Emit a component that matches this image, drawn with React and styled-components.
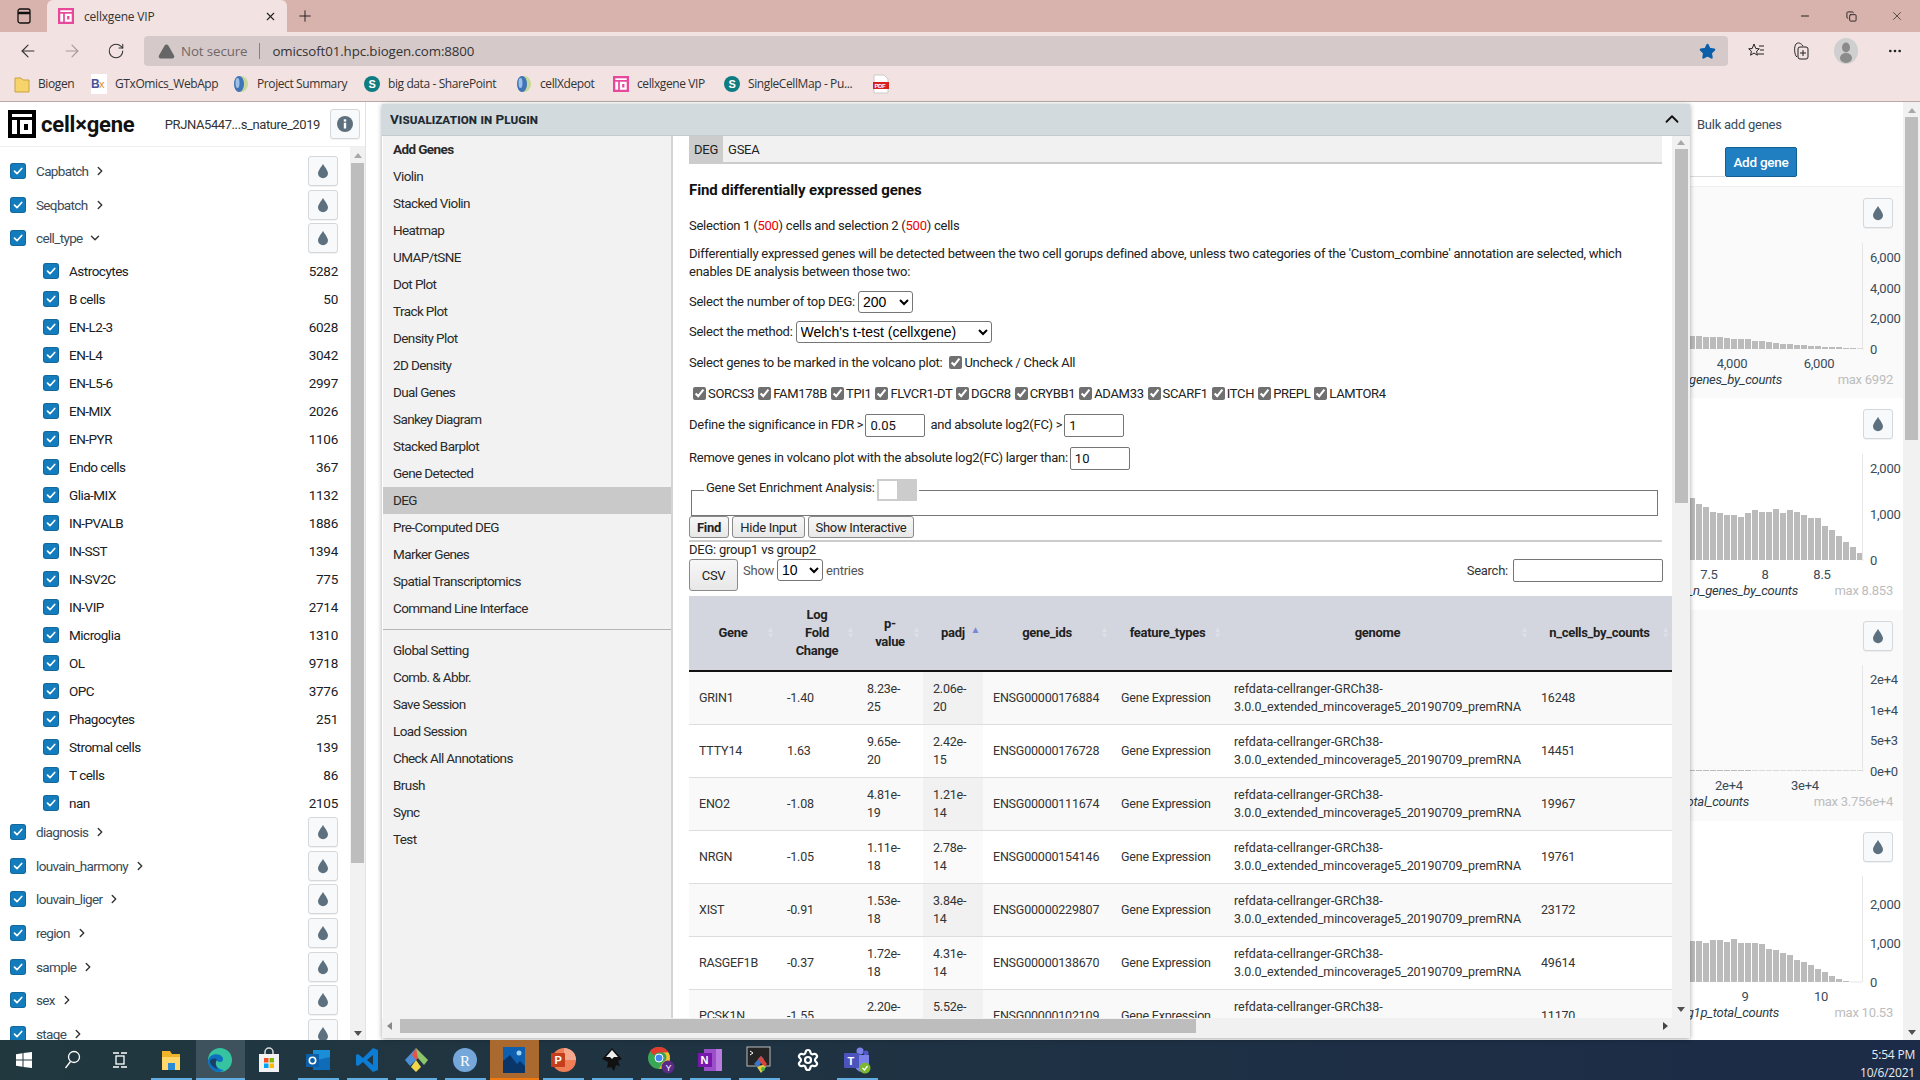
import React from "react";
import styled, { createGlobalStyle } from "styled-components";
import { ArrowLeft, ArrowRight, RotateCw, Plus, X, Minus, Copy, Star, ChevronRight, ChevronDown, ChevronUp, Settings, MoreHorizontal, AlertTriangle } from "lucide-react";

const Global = createGlobalStyle`
  html, body { margin: 0; padding: 0; background: #fff; }
  * { box-sizing: border-box; }
  body { font-family: Roboto, "Liberation Sans", sans-serif; font-size: 13px; letter-spacing: -0.25px; color: #222; }
`;

const Root = styled.div`width:1920px;height:1080px;display:flex;flex-direction:column;overflow:hidden;`;
const TabBar = styled.div`height:32px;background:#d8b3ad;display:flex;align-items:stretch;flex:none;font-family:"Open Sans",sans-serif;letter-spacing:-.2px;`;
const TabToggle = styled.div`width:47px;display:flex;align-items:center;justify-content:center;`;
const Tab = styled.div`width:240px;background:#f2e2e1;border-radius:6px 6px 0 0;display:flex;align-items:center;padding:0 10px 0 11px;gap:10px;font-size:12px;color:#333;`;
const TabTitle = styled.span`flex:1;`;
const NewTab = styled.div`width:36px;display:flex;align-items:center;justify-content:center;`;
const WindowControls = styled.div`margin-left:auto;display:flex;align-items:center;padding-right:0;`;
const WindowButton = styled.div`width:46px;height:28px;display:flex;align-items:center;justify-content:center;color:#222;`;
const NavBar = styled.div`height:34px;background:#f2e2e1;padding-top:4px;display:flex;flex:none;padding-left:6px;`;
const NavButton = styled.div`width:44px;height:30px;display:flex;align-items:center;justify-content:center;color:${p => p.$dim ? "#a59a9a" : "#333"};`;
const Address = styled.div`flex:1;margin-left:6px;height:30px;background:#d5c9c9;border-radius:4px;display:flex;align-items:center;padding:0 12px 0 14px;font-family:"Open Sans",sans-serif;font-size:13.3px;letter-spacing:-.1px;color:#333;`;
const NotSecure = styled.span`color:#6f6767;margin-left:6px;`;
const Sep = styled.span`width:1px;height:16px;background:#8a8080;margin:0 12px 0 12px;`;
const Url = styled.span`flex:1;`;
const NavSlot = styled.div`width:${p => p.$w}px;height:30px;display:flex;align-items:center;justify-content:center;color:#222;margin-left:${p => p.$ml || 0}px;`;
const Bookmarks = styled.div`height:36px;background:#f2e2e1;border-bottom:1px solid #b9aaa8;display:flex;align-items:center;padding-left:14px;flex:none;font-family:"Open Sans",sans-serif;font-size:12px;letter-spacing:-.4px;color:#333;`;
const BookItem = styled.div`width:${p => p.$w}px;display:flex;align-items:center;gap:8px;white-space:nowrap;`;

const Page = styled.div`flex:1;min-height:0;position:relative;display:flex;background:#fff;`;
const Left = styled.aside`width:366px;border-right:1px solid #e3e3e3;display:flex;flex-direction:column;flex:none;`;
const LeftHead = styled.div`height:45px;display:flex;align-items:center;padding:0 5px 0 8px;border-bottom:1px solid #eee;flex:none;`;
const LogoText = styled.span`font-weight:700;font-size:22px;letter-spacing:-.2px;color:#111;margin-left:5px;`;
const Dataset = styled.span`margin-left:auto;font-size:13px;color:#333;letter-spacing:-.4px;margin-right:10px;`;
const IconBtn = styled.div`width:30px;height:30px;border:1px solid #d4d8da;border-radius:3px;background:#f8f9fa;display:flex;align-items:center;justify-content:center;flex:none;box-shadow:0 1px 0 rgba(0,0,0,.05);`;
const LeftBody = styled.div`flex:1;min-height:0;display:flex;overflow:hidden;`;
const LeftList = styled.div`flex:1;padding:7px 12px 0 10px;overflow:hidden;`;
const TopRow = styled.div`height:33.7px;display:flex;align-items:center;color:#394b59;font-size:13.5px;letter-spacing:-.65px;`;
const TopLabel = styled.span`margin-left:10px;margin-right:5px;`;
const Box = styled.span`width:16px;height:16px;background:#137cbd;border-radius:3px;display:flex;align-items:center;justify-content:center;flex:none;box-shadow:inset 0 0 0 1px rgba(16,22,26,.2);`;
const Push = styled.div`margin-left:auto;`;
const SubList = styled.div`padding:2px 0 0 33px;margin-bottom:-2px;`;
const SubRow = styled.div`height:28px;display:flex;align-items:center;color:#182026;font-size:13.5px;letter-spacing:-.5px;`;
const SubLabel = styled.span`margin-left:10px;`;
const Count = styled.span`margin-left:auto;letter-spacing:-.25px;`;

const Scroll = styled.div`width:${p => p.$w}px;background:${p => p.$bg || "#f1f1f1"};display:flex;flex-direction:column;align-items:center;flex:none;padding-top:${p => p.$pt || 0}px;`;
const Thumb = styled.div`width:13px;height:${p => p.$h}px;background:#bdbdbd;margin-top:${p => p.$mt || 0}px;flex:none;`;
const ArrowUp = styled.div`width:0;height:0;border:4px solid transparent;border-top:0;border-bottom:5px solid #a8a8a8;margin-top:${p => p.$mt || 0}px;flex:none;`;
const ArrowDown = styled.div`width:0;height:0;border:4px solid transparent;border-bottom:0;border-top:5px solid #505050;margin-top:auto;margin-bottom:${p => p.$mb}px;flex:none;`;

const Center = styled.div`flex:1;`;
const Right = styled.aside`width:420px;flex:none;display:flex;`;
const RightMain = styled.div`width:403px;flex:none;`;
const RightTop = styled.div`height:84.5px;border-bottom:1px solid #f0f0f0;padding-top:15px;`;
const Bulk = styled.div`padding-left:197px;height:16px;line-height:16px;color:#394b59;`;
const AddRow = styled.div`display:flex;justify-content:flex-end;padding-right:106px;margin-top:14px;`;
const AddInput = styled.div`width:200px;height:30px;border-bottom:1px solid #ddd;`;
const AddBtn = styled.div`width:72px;height:30px;background:#1f7fc1;border:1px solid #10618f;border-radius:2px;color:#fff;display:flex;align-items:center;justify-content:center;font-weight:500;font-size:13.5px;`;
const Card = styled.div`height:211.5px;position:relative;background:${p => p.$alt ? "#fafafa" : "#fff"};`;
const CardBtn = styled(IconBtn)`position:absolute;right:10px;top:11px;`;
const Chart = styled.svg`display:block;`;

const Modal = styled.section`position:absolute;left:382px;top:2px;width:1308px;height:934px;background:#fff;box-shadow:0 1px 5px rgba(0,0,0,.35);display:flex;flex-direction:column;overflow:hidden;`;
const ModalHead = styled.header`height:32px;background:#d3dadd;border-bottom:1px solid #c4cbce;display:flex;align-items:center;justify-content:space-between;padding:0 7px 2px 8px;flex:none;`;
const ModalTitle = styled.h2`margin:0;font-size:13.5px;font-weight:700;font-variant:small-caps;letter-spacing:.05px;color:#1e2a33;`;
const ModalBody = styled.div`flex:1;min-height:0;display:flex;`;
const Menu = styled.nav`width:290px;margin-left:1px;background:#f2f2f2;border-right:2px solid #d4d4d4;flex:none;`;
const MenuItem = styled.div`height:27px;display:flex;align-items:center;padding:0 0 2px 10px;color:#2a2a2a;font-size:13.5px;letter-spacing:-.6px;font-weight:${p => p.$bold ? 700 : 400};background:${p => p.$active ? "#c9c9c9" : "transparent"};`;
const MenuDivider = styled.div`border-top:1px solid #b5b5b5;margin:7px 0 0;padding-top:7px;`;
const MainPane = styled.div`width:999px;padding-left:16px;overflow:hidden;flex:none;`;
const Tabs = styled.div`height:28px;width:973px;background:#f1f1f1;border-bottom:2px solid #ccc;display:flex;`;
const TabPill = styled.div`height:26px;padding:0 5px;display:flex;align-items:center;background:${p => p.$on ? "#ccc" : "transparent"};color:#222;`;
const Heading = styled.h3`margin:16px 0 0;height:20px;line-height:20px;font-size:15px;font-weight:700;letter-spacing:-.1px;color:#111;`;
const Line = styled.div`margin-top:${p => p.$mt}px;min-height:${p => p.$h}px;line-height:18px;display:flex;align-items:center;gap:${p => p.$gap ?? 3}px;white-space:pre;color:#222;padding-left:${p => p.$pl || 0}px;letter-spacing:${p => p.$ls || "inherit"};`;
const Para = styled.div`margin-top:10px;line-height:18px;width:973px;color:#222;`;
const Red = styled.span`color:#e00;`;
const Select = styled.select`height:${p => p.$h || 22}px;width:${p => p.$w}px;font:14px Arial,"Liberation Sans",sans-serif;letter-spacing:0;background:#fff;border:1px solid #767676;border-radius:3px;color:#000;`;
const Check = styled.input.attrs({ type: "checkbox", defaultChecked: true })`width:13px;height:13px;margin:0 2px 2px 1px;accent-color:#707070;flex:none;`;
const Num = styled.input.attrs({ type: "text" })`width:60px;height:23px;border:1px solid #767676;border-radius:2px;padding:0 4px;font:13px Roboto,sans-serif;color:#111;margin:0 2px;`;
const Field = styled.fieldset`margin:9px 4px 0 2px;width:967px;height:37px;padding:0;border:1px solid #767676;border-width:1.5px;`;
const Legend = styled.legend`margin-left:12px;padding:0 2px;display:flex;align-items:center;height:22px;gap:2px;color:#222;`;
const LegendText = styled.span`margin-bottom:5px;`;
const Toggle = styled.span`width:40px;height:22px;background:#ccc;padding:2px;display:block;`;
const Knob = styled.span`width:18px;height:18px;background:#fff;display:block;`;
const Buttons = styled.div`display:flex;gap:3px;height:22px;`;
const Btn = styled.button`height:${p => p.$h || 22}px;width:${p => p.$w}px;border:1px solid #8a8a8a;border-radius:3px;background:linear-gradient(#f7f7f7,#e8e8e8);font:${p => p.$bold ? 700 : 400} 13px Roboto,sans-serif;letter-spacing:-.3px;color:#222;padding:0;`;
const Rule = styled.div`height:2px;width:973px;background:#ccc;margin-top:2px;`;
const Caption = styled.div`height:15px;line-height:15px;`;
const Controls = styled.div`margin-top:1px;margin-bottom:4px;height:34px;width:974px;display:flex;align-items:flex-start;`;
const CsvBtn = styled(Btn)`margin:1px 5px 0 0;`;
const Show = styled.div`display:flex;align-items:center;gap:3px;color:#555;margin-top:1px;`;
const SearchBox = styled.label`margin:1px 0 0 auto;display:flex;align-items:center;gap:5px;color:#333;`;
const SearchInput = styled.input`width:150px;height:23px;border:1px solid #767676;border-radius:2px;`;
const Table = styled.table`table-layout:fixed;width:983px;border-collapse:collapse;`;
const Th = styled.th`height:75px;background:#d3d6df;border-bottom:2px solid #111;padding:0 ${p => p.$pr || 8}px 0 8px;font-size:13px;letter-spacing:-.3px;font-weight:700;line-height:18px;text-align:center;position:relative;color:#222;`;
const Sort = styled.span`position:absolute;right:3px;top:50%;margin-top:-6px;font-size:${p => p.$on ? 10 : 8}px;line-height:6px;color:${p => p.$on ? "#7c86d8" : "#dfe0e4"};display:block;`;
const Td = styled.td`height:53px;padding:0 10px;border-bottom:1px solid #ddd;line-height:18px;font-size:12.5px;color:#333;letter-spacing:${p => p.$wide ? "-.06px" : "-.2px"};background:${p => p.$sorted ? (p.$odd ? "#f1f1f1" : "#fafafa") : (p.$odd ? "#f9f9f9" : "#fff")};white-space:nowrap;`;
const HScroll = styled.div`height:20px;background:#f1f1f1;display:flex;align-items:center;flex:none;padding-bottom:4px;`;
const ArrowL = styled.div`width:0;height:0;border:4px solid transparent;border-left:0;border-right:5px solid #888;margin:0 5px;flex:none;`;
const ArrowR = styled.div`width:0;height:0;border:4px solid transparent;border-right:0;border-left:5px solid #444;margin-left:auto;margin-right:22px;flex:none;`;
const HThumb = styled.div`width:796px;height:14px;background:#bdbdbd;margin-left:3px;`;

const Taskbar = styled.footer`height:40px;flex:none;background:linear-gradient(90deg,#21383f,#1c2b47);display:flex;color:#fff;padding-left:0;`;
const TaskSlot = styled.div`width:${p => p.$w || 49}px;height:40px;position:relative;display:flex;align-items:center;justify-content:center;flex:none;background:${p => p.$bg || "transparent"};
  &::after{content:"";display:${p => p.$bar ? "block" : "none"};position:absolute;bottom:0;height:2px;left:${p => p.$full ? 0 : 4}px;right:${p => p.$full ? 0 : 4}px;background:${p => p.$barColor || "#62aee2"};}`;
const Spacer = styled.div`width:2.5px;flex:none;`;
const Clock = styled.div`margin-left:auto;padding:6px 5px 0 0;text-align:right;font-size:12px;line-height:18px;font-family:"Open Sans",sans-serif;letter-spacing:-.2px;color:#e8ecf0;`;

const Drop = () => <svg width="14" height="16" viewBox="0 0 14 16"><path fill="#5c7080" d="M7 1C6 3 2 7.500 2 10.300A5 5 0 0 0 12 10.300C12 7.500 8 3 7 1Z" /></svg>;
const Tick = () => <svg width="12" height="12" viewBox="0 0 12 12"><path d="M2.500 6.200 5 8.700 9.700 3.500" fill="none" stroke="#fff" strokeWidth="1.700" strokeLinecap="round" strokeLinejoin="round" /></svg>;
const Cb = () => <Box><Tick /></Box>;
const Logo = ({ s = 28, bg = "#000" }) => (
  <svg width={s} height={s} viewBox="0 0 28 28"><rect width="28" height="28" fill={bg} /><rect x="4" y="4" width="20" height="3" fill="#fff" /><rect x="4" y="10" width="5" height="14" fill="#fff" /><path fillRule="evenodd" fill="#fff" d="M12 10h12v14H12zM16 14v6h4v-6z" /></svg>
);
const SpIcon = () => <svg width="16" height="18" viewBox="0 0 16 18"><circle cx="8" cy="9" r="8" fill="#0f7c82" /><text x="4.500" y="13" fontSize="11" fontWeight="700" fill="#fff" fontFamily="Liberation Sans">S</text></svg>;
const Ball = () => <svg width="16" height="18" viewBox="0 0 16 18"><ellipse cx="8" cy="9" rx="7" ry="8" fill="#c7d89a" /><ellipse cx="6" cy="9" rx="5" ry="8" fill="#3f74b8" /><ellipse cx="4.500" cy="8" rx="2" ry="5" fill="#9cc0e8" /></svg>;

const groups1 = [["Capbatch", "r"], ["Seqbatch", "r"], ["cell_type", "d"]];
const groups2 = ["diagnosis", "louvain_harmony", "louvain_liger", "region", "sample", "sex", "stage"];
const cats = [["Astrocytes", 5282], ["B cells", 50], ["EN-L2-3", 6028], ["EN-L4", 3042], ["EN-L5-6", 2997], ["EN-MIX", 2026], ["EN-PYR", 1106], ["Endo cells", 367], ["Glia-MIX", 1132], ["IN-PVALB", 1886], ["IN-SST", 1394], ["IN-SV2C", 775], ["IN-VIP", 2714], ["Microglia", 1310], ["OL", 9718], ["OPC", 3776], ["Phagocytes", 251], ["Stromal cells", 139], ["T cells", 86], ["nan", 2105]];
const menu1 = ["Add Genes", "Violin", "Stacked Violin", "Heatmap", "UMAP/tSNE", "Dot Plot", "Track Plot", "Density Plot", "2D Density", "Dual Genes", "Sankey Diagram", "Stacked Barplot", "Gene Detected", "DEG", "Pre-Computed DEG", "Marker Genes", "Spatial Transcriptomics", "Command Line Interface"];
const menu2 = ["Global Setting", "Comb. & Abbr.", "Save Session", "Load Session", "Check All Annotations", "Brush", "Sync", "Test"];
const genesList = ["SORCS3", "FAM178B", "TPI1", "FLVCR1-DT", "DGCR8", "CRYBB1", "ADAM33", "SCARF1", "ITCH", "PREPL", "LAMTOR4"];
const rows = [
  ["GRIN1", "-1.40", "8.23e-", "25", "2.06e-", "20", "ENSG00000176884", "16248"],
  ["TTTY14", "1.63", "9.65e-", "20", "2.42e-", "15", "ENSG00000176728", "14451"],
  ["ENO2", "-1.08", "4.81e-", "19", "1.21e-", "14", "ENSG00000111674", "19967"],
  ["NRGN", "-1.05", "1.11e-", "18", "2.78e-", "14", "ENSG00000154146", "19761"],
  ["XIST", "-0.91", "1.53e-", "18", "3.84e-", "14", "ENSG00000229807", "23172"],
  ["RASGEF1B", "-0.37", "1.72e-", "18", "4.31e-", "14", "ENSG00000138670", "49614"],
  ["PCSK1N", "-1.55", "2.20e-", "18", "5.52e-", "14", "ENSG00000102109", "11170"],
];
const widths = [88, 80, 66, 60, 128, 113, 307, 141];

const cards = [
  { alt: true, base: 162, bars: [13, 13, 12, 12, 12, 11, 10, 10, 10, 8, 8, 7, 6, 5, 5, 4, 4, 3, 3, 2, 2, 2, 1, 1, 0.5], y: [["6,000", 70], ["4,000", 101], ["2,000", 131], ["0", 162]], x: [["4,000", 1732], ["6,000", 1819]], label: "n_genes_by_counts", end: 1782, max: "max 6992" },
  { base: 162, bars: [62, 56, 53, 48, 47, 45, 45, 43, 47, 50, 48, 48, 51, 47, 50, 48, 45, 42, 42, 34, 30, 24, 18, 13, 7], y: [["2,000", 70], ["1,000", 116], ["0", 162]], x: [["7.5", 1709], ["8", 1765], ["8.5", 1822]], label: "log1p_n_genes_by_counts", end: 1798, max: "max 8.853" },
  { alt: true, base: 161, bars: [1, 1, 1, 1, 1, 1, 1, 1, 1, 0.5, 0.5, 0.5, 0.5, 0.5, 0.5, 0.5, 0.5, 0.5, 0.5, 0.5, 0.5, 0.5, 0.5, 0.5, 0.5], y: [["2e+4", 69], ["1e+4", 100], ["5e+3", 130], ["0e+0", 161]], x: [["2e+4", 1729], ["3e+4", 1805]], label: "total_counts", end: 1749, max: "max 3.756e+4" },
  { base: 161, bars: [41, 41, 39, 42, 42, 40, 43, 39, 39, 39, 38, 33, 32, 29, 27, 22, 20, 17, 13, 10, 6, 3, 1], y: [["2,000", 83], ["1,000", 122], ["0", 161]], x: [["9", 1745], ["10", 1821]], label: "log1p_total_counts", end: 1779, max: "max 10.53" },
];

function Histogram({ c }) {
  const o = 1500;
  return (
    <Card $alt={c.alt}>
      <CardBtn><Drop /></CardBtn>
      <Chart width="403" height="211" viewBox="0 0 403 211" fontFamily="Roboto, sans-serif" fontSize="13" fill="#394b59">
        {c.bars.map((h, i) => <rect key={i} x={189 + i * 7} y={c.base - h} width="6" height={h} fill="#bbb" />)}
        <path d={`M362.500 ${c.base - 106}V${c.base}M${189 + c.bars.length * 7} ${c.base}H362`} stroke="#e6e6e6" fill="none" />
        {c.y.map(([t, y]) => <text key={t} x="370" y={y + 5}>{t}</text>)}
        {c.x.map(([t, x]) => <text key={t} x={x - o} y={c.base + 19} textAnchor="middle">{t}</text>)}
        <text x={c.end - o} y={c.base + 35} textAnchor="end" fontStyle="italic" fill="#2b3a45">{c.label}</text>
        <text x="393" y={c.base + 35} textAnchor="end" fill="#bdbdbd">{c.max}</text>
      </Chart>
    </Card>
  );
}

const Win = () => <svg width="18" height="18" viewBox="0 0 18 18" fill="#fff"><path d="M1 3.200 7.500 2.300V8.500H1zM8.500 2.100 17 1V8.500H8.500zM1 9.500H7.500V15.700L1 14.800zM8.500 9.500H17V17L8.500 15.900z" /></svg>;
const SearchGlyph = () => <svg width="18" height="20" viewBox="0 0 18 20" fill="none" stroke="#fff" strokeWidth="1.300"><circle cx="11" cy="7" r="5.500" /><path d="M7.500 11.500 2.500 18" /></svg>;
const TaskView = () => <svg width="18" height="18" viewBox="0 0 18 18" fill="none" stroke="#fff" strokeWidth="1.300"><rect x="5" y="5" width="8" height="8" /><path d="M2 2h6M10 2h6M2 16h6M10 16h6" /></svg>;
const Explorer = () => <svg width="24" height="24" viewBox="0 0 24 24"><path fill="#f0b429" d="M3 3h8l2 3h8v16H3z" /><rect x="3" y="9" width="18" height="13" fill="#ffd76a" /><rect x="9" y="15" width="7" height="7" fill="#2a8ad4" /></svg>;
const Edge = () => <svg width="26" height="26" viewBox="0 0 26 26"><circle cx="13" cy="13" r="12" fill="#36c4a0" /><path fill="#0c6fbf" d="M1 14C2 8 8 6 13 8c4 2 4 7 0 7-2 0-3-1-3-2-3 3 0 10 7 10-2 1-3 2-5 2C6 25 1 20 1 14Z" /><path fill="#1b3d68" d="M10 13c-2 2-2 6 1 9-5-1-8-5-8-8 2-3 5-3 7-1Z" /></svg>;
const Store = () => <svg width="24" height="26" viewBox="0 0 24 26"><path d="M8 8V5a4 4 0 0 1 8 0v3" fill="none" stroke="#ddd" strokeWidth="1.500" /><rect x="2" y="7" width="20" height="18" fill="#f2f2f2" /><rect x="7" y="11" width="4.500" height="4.500" fill="#f25022" /><rect x="12.500" y="11" width="4.500" height="4.500" fill="#7fba00" /><rect x="7" y="16.500" width="4.500" height="4.500" fill="#00a4ef" /><rect x="12.500" y="16.500" width="4.500" height="4.500" fill="#ffb900" /></svg>;
const Outlook = () => <svg width="26" height="26" viewBox="0 0 26 26"><rect x="8" y="3" width="17" height="20" fill="#1a8ed6" /><path d="M8 14 25 10v13H8z" fill="#0f6cb8" /><rect x="1" y="7" width="13" height="13" fill="#0b5ea8" /><circle cx="7.500" cy="13.500" r="3.200" fill="none" stroke="#fff" strokeWidth="1.600" /></svg>;
const VSCode = () => <svg width="24" height="26" viewBox="0 0 24 26"><path fill="#0c7cd5" d="M18 1 8 11 3 7 1 8v10l2 1 5-4 10 10 5-2V3zM18 8v10l-6-5z" /></svg>;
const Git = () => <svg width="26" height="26" viewBox="0 0 26 26"><path fill="#4d8fd6" d="M13 1 2 13l5 6 6-6z" /><path fill="#e5534b" d="M13 1 9 8l4 5 5-4z" /><path fill="#8dc56c" d="M13 1l12 12-4 5-6-7z" /><path fill="#f2d649" d="M8 20l5-7 5 7-5 5z" /></svg>;
const RIcon = () => <svg width="24" height="24" viewBox="0 0 24 24"><circle cx="12" cy="12" r="12" fill="#75a7da" /><text x="7" y="17.500" fontSize="15" fill="#fff" fontFamily="Liberation Serif">R</text></svg>;
const Photos = () => <svg width="24" height="28" viewBox="0 0 24 28"><rect x="1" y="1" width="22" height="26" fill="#0f5fb0" /><path d="M1 27V15l7-6 7 9 3-3 5 5v7z" fill="#0a3569" /><circle cx="17" cy="7" r="2.500" fill="#9bd3f7" /></svg>;
const Ppt = () => <svg width="26" height="26" viewBox="0 0 26 26"><circle cx="14" cy="13" r="12" fill="#ef7d55" /><path d="M14 13V1a12 12 0 0 1 12 12z" fill="#f4a88d" /><rect x="1" y="6" width="14" height="14" rx="1" fill="#c43e1c" /><text x="4.500" y="17" fontSize="11" fontWeight="700" fill="#fff" fontFamily="Liberation Sans">P</text></svg>;
const Ink = () => <svg width="22" height="26" viewBox="0 0 22 26"><path d="M11 1 21 12l-4 2 2 5-4-1-2 6-3-4-4 1 1-6-6-3z" fill="#111" /><path d="M11 3 17 10h-4l-2 2-2-2H5z" fill="#eee" /></svg>;
const Chrome = () => <svg width="28" height="28" viewBox="0 0 28 28"><circle cx="12" cy="12" r="11" fill="#3aa757" /><path d="M12 1a11 11 0 0 1 9.500 5.500H12a5.500 5.500 0 0 0-5 3L3 5a11 11 0 0 1 9-4z" fill="#e33b2e" /><path d="M21.500 6.500A11 11 0 0 1 12 23l4-7a5 5 0 0 0 0-9.500z" fill="#fbc02d" /><circle cx="12" cy="12" r="4" fill="#4285f4" stroke="#fff" /><circle cx="21" cy="21" r="6.500" fill="#5b2a86" /><text x="18.500" y="24.500" fontSize="9" fill="#fff" fontFamily="Liberation Sans">Y</text></svg>;
const OneNote = () => <svg width="26" height="26" viewBox="0 0 26 26"><rect x="7" y="2" width="18" height="22" fill="#9b4fc9" /><rect x="19" y="2" width="6" height="22" fill="#bb7ce0" /><rect x="1" y="6" width="14" height="14" fill="#7719aa" /><text x="3.500" y="17" fontSize="11" fontWeight="700" fill="#fff" fontFamily="Liberation Sans">N</text></svg>;
const Term = () => <svg width="26" height="28" viewBox="0 0 26 28"><rect x="1" y="1" width="23" height="19" fill="#242424" stroke="#bbb" /><path d="M4 5l3 2-3 2" stroke="#fff" fill="none" /><path d="M8 18 15 10l3 3-6 8z" fill="#3a78c9" /><path d="M15 10l6 8-3 3-6-8z" fill="#d9453d" /><path d="M11 21 15 27l5-6-3-2z" fill="#e4d13c" /><circle cx="17" cy="23" r="2" fill="#4cae4f" /></svg>;
const Teams = () => <svg width="28" height="28" viewBox="0 0 28 28"><circle cx="17" cy="5" r="3.500" fill="#7b83eb" /><circle cx="23" cy="7" r="2.500" fill="#5059c9" /><path d="M12 9h14v10a5 5 0 0 1-14 0z" fill="#7b83eb" /><rect x="1" y="7" width="15" height="15" rx="1" fill="#4b53bc" /><text x="4.500" y="19" fontSize="11" fontWeight="700" fill="#fff" fontFamily="Liberation Sans">T</text><circle cx="22" cy="22" r="5.500" fill="#7cb82f" /><path d="M19.500 22l2 2 3-4" stroke="#fff" fill="none" strokeWidth="1.300" /></svg>;
const Folder = () => <svg width="16" height="18" viewBox="0 0 16 18"><path d="M1 3h6l2 2h6v12H1z" fill="#f7d36b" stroke="#c9a23e" /></svg>;
const Pdf = () => <svg width="16" height="20" viewBox="0 0 16 20"><path d="M1 1h10l4 4v14H1z" fill="#fff" stroke="#ccc" /><rect x="0" y="8" width="16" height="7" fill="#d5221c" /><text x="1.500" y="14" fontSize="6" fontWeight="700" fill="#fff" fontFamily="Liberation Sans">PDF</text></svg>;
const Bx = () => <svg width="16" height="20" viewBox="0 0 16 20"><rect width="16" height="20" fill="#fff" /><text x="0" y="14" fontSize="12" fontWeight="700" fill="#4a4f9a" fontFamily="Liberation Sans">B</text><text x="8" y="14" fontSize="11" fill="#e08a2e" fontFamily="Liberation Sans">x</text></svg>;

export default function App() {
  return (
    <Root>
      <Global />
      <TabBar>
        <TabToggle>
          <svg width="16" height="18" viewBox="0 0 16 18" fill="none" stroke="#111" strokeWidth="1.300"><rect x="2" y="2" width="12" height="14" rx="2" /><path d="M2 6h12" strokeWidth="2.500" /></svg>
        </TabToggle>
        <Tab>
          <Logo s={16} bg="#e8479b" />
          <TabTitle>cellxgene VIP</TabTitle>
          <X size={13} color="#222" />
        </Tab>
        <NewTab><Plus size={18} strokeWidth={1.3} color="#222" /></NewTab>
        <WindowControls>
          <WindowButton><Minus size={12} /></WindowButton>
          <WindowButton><Copy size={11} /></WindowButton>
          <WindowButton><X size={14} strokeWidth={1.2} /></WindowButton>
        </WindowControls>
      </TabBar>
      <NavBar>
        <NavButton><ArrowLeft size={20} strokeWidth={1.4} /></NavButton>
        <NavButton $dim><ArrowRight size={20} strokeWidth={1.4} /></NavButton>
        <NavButton><RotateCw size={18} strokeWidth={1.4} /></NavButton>
        <Address>
          <AlertTriangle size={17} fill="#666" color="#666" />
          <NotSecure>Not secure</NotSecure>
          <Sep />
          <Url>omicsoft01.hpc.biogen.com:8800</Url>
          <Star size={17} fill="#0b5ea8" color="#0b5ea8" />
        </Address>
        <NavSlot $w={48} $ml={4}>
          <svg width="18" height="18" viewBox="0 0 18 18" fill="none" stroke="#222"><path d="M7 2 8.800 6.500l3.500.3-2.700 2.400.8 4L7 11l-3.400 2.200.8-4L1.700 6.800l3.500-.3zM12 4h5M13 8h4M11 12h6" /></svg>
        </NavSlot>
        <NavSlot $w={42}>
          <svg width="18" height="20" viewBox="0 0 18 20" fill="none" stroke="#222"><rect x="6" y="6" width="10" height="12" rx="2" /><path d="M11 9v6M8 12h6M5 16C2 14 2 5 4 3s5-1 7 2" /></svg>
        </NavSlot>
        <NavSlot $w={48}>
          <svg width="24" height="26" viewBox="0 0 24 26"><ellipse cx="12" cy="13" rx="12" ry="13" fill="#cfcfcf" /><ellipse cx="12" cy="9.500" rx="4" ry="5" fill="#8b8b8b" /><ellipse cx="12" cy="20" rx="6" ry="5" fill="#8b8b8b" /></svg>
        </NavSlot>
        <NavSlot $w={50}><MoreHorizontal size={16} /></NavSlot>
      </NavBar>
      <Bookmarks>
        <BookItem $w={77}><Folder />Biogen</BookItem>
        <BookItem $w={142}><Bx />GTxOmics_WebApp</BookItem>
        <BookItem $w={131}><Ball />Project Summary</BookItem>
        <BookItem $w={152}><SpIcon />big data - SharePoint</BookItem>
        <BookItem $w={97}><Ball />cellXdepot</BookItem>
        <BookItem $w={111}><Logo s={16} bg="#e8479b" />cellxgene VIP</BookItem>
        <BookItem $w={149}><SpIcon />SingleCellMap - Pu...</BookItem>
        <BookItem $w={20}><Pdf /></BookItem>
      </Bookmarks>
      <Page>
        <Left>
          <LeftHead>
            <Logo />
            <LogoText>cell×gene</LogoText>
            <Dataset>PRJNA5447...s_nature_2019</Dataset>
            <IconBtn>
              <svg width="16" height="16" viewBox="0 0 16 16"><circle cx="8" cy="8" r="8" fill="#5c7080" /><rect x="6.800" y="6.800" width="2.400" height="5.700" fill="#fff" /><rect x="6.800" y="3.300" width="2.400" height="2.300" fill="#fff" /></svg>
            </IconBtn>
          </LeftHead>
          <LeftBody>
            <LeftList>
              {groups1.map(([g, d]) => (
                <TopRow key={g}>
                  <Cb /><TopLabel>{g}</TopLabel>
                  {d === "r" ? <ChevronRight size={14} strokeWidth={2.4} color="#333" /> : <ChevronDown size={14} strokeWidth={2.4} color="#333" />}
                  <Push><IconBtn><Drop /></IconBtn></Push>
                </TopRow>
              ))}
              <SubList>
                {cats.map(([n, c]) => <SubRow key={n}><Cb /><SubLabel>{n}</SubLabel><Count>{c}</Count></SubRow>)}
              </SubList>
              {groups2.map(g => (
                <TopRow key={g}>
                  <Cb /><TopLabel>{g}</TopLabel>
                  <ChevronRight size={14} strokeWidth={2.4} color="#333" />
                  <Push><IconBtn><Drop /></IconBtn></Push>
                </TopRow>
              ))}
            </LeftList>
            <Scroll $w={15} $pt={6}>
              <ArrowUp />
              <Thumb $h={700} $mt={5} />
              <ArrowDown $mb={4} />
            </Scroll>
          </LeftBody>
        </Left>
        <Center />
        <Right>
          <RightMain>
            <RightTop>
              <Bulk>Bulk add genes</Bulk>
              <AddRow><AddInput /><AddBtn>Add gene</AddBtn></AddRow>
            </RightTop>
            {cards.map(c => <Histogram key={c.label} c={c} />)}
          </RightMain>
          <Scroll $w={17} $pt={6}>
            <ArrowUp />
            <Thumb $h={323} $mt={4} />
            <ArrowDown $mb={5} />
          </Scroll>
        </Right>
        <Modal>
          <ModalHead>
            <ModalTitle>Visualization in Plugin</ModalTitle>
            <ChevronUp size={22} strokeWidth={2} color="#111" />
          </ModalHead>
          <ModalBody>
            <Menu>
              {menu1.map((m, i) => <MenuItem key={m} $bold={i === 0} $active={m === "DEG"}>{m}</MenuItem>)}
              <MenuDivider>
                {menu2.map(m => <MenuItem key={m}>{m}</MenuItem>)}
              </MenuDivider>
            </Menu>
            <MainPane>
              <Tabs><TabPill $on>DEG</TabPill><TabPill>GSEA</TabPill></Tabs>
              <Heading>Find differentially expressed genes</Heading>
              <Line $mt={17} $h={18} $gap={0}>Selection 1 (<Red>500</Red>) cells and selection 2 (<Red>500</Red>) cells</Line>
              <Para>Differentially expressed genes will be detected between the two cell gorups defined above, unless two categories of the 'Custom_combine' annotation are selected, which<br />enables DE analysis between those two:</Para>
              <Line $mt={10} $h={22}>Select the number of top DEG:<Select $w={55} defaultValue="200"><option>200</option></Select></Line>
              <Line $mt={8} $h={22}>Select the method:<Select $w={196} defaultValue="w"><option value="w">Welch's t-test (cellxgene)</option></Select></Line>
              <Line $mt={11} $h={18} $gap={0}>Select genes to be marked in the volcano plot:  <Check />Uncheck / Check All</Line>
              <Line $mt={13} $h={18} $pl={3} $gap={0} $ls="-.31px">
                {genesList.map(g => <React.Fragment key={g}><Check />{g} </React.Fragment>)}
              </Line>
              <Line $mt={10} $h={24} $gap={0}>Define the significance in FDR &gt;<Num defaultValue="0.05" /> and absolute log2(FC) &gt;<Num defaultValue="1" /></Line>
              <Line $mt={9} $h={24} $gap={0}>Remove genes in volcano plot with the absolute log2(FC) larger than:<Num defaultValue="10" /></Line>
              <Field>
                <Legend><LegendText>Gene Set Enrichment Analysis:</LegendText><Toggle><Knob /></Toggle></Legend>
              </Field>
              <Buttons>
                <Btn $w={40} $bold>Find</Btn>
                <Btn $w={73}>Hide Input</Btn>
                <Btn $w={106}>Show Interactive</Btn>
              </Buttons>
              <Rule />
              <Caption>DEG: group1 vs group2</Caption>
              <Controls>
                <CsvBtn $w={49} $h={32}>CSV</CsvBtn>
                <Show>Show<Select $w={46} $h={22} defaultValue="10"><option>10</option></Select>entries</Show>
                <SearchBox>Search:<SearchInput /></SearchBox>
              </Controls>
              <Table>
                <colgroup>{widths.map((w, i) => <col key={i} width={w} />)}</colgroup>
                <thead>
                  <tr>
                    <Th>Gene<Sort>▲<br />▼</Sort></Th>
                    <Th>Log<br />Fold<br />Change<Sort>▲<br />▼</Sort></Th>
                    <Th>p-<br />value<Sort>▲<br />▼</Sort></Th>
                    <Th>padj<Sort $on>▲</Sort></Th>
                    <Th>gene_ids<Sort>▲<br />▼</Sort></Th>
                    <Th>feature_types<Sort>▲<br />▼</Sort></Th>
                    <Th>genome<Sort>▲<br />▼</Sort></Th>
                    <Th $pr={12}>n_cells_by_counts<Sort>▲<br />▼</Sort></Th>
                  </tr>
                </thead>
                <tbody>
                  {rows.map((r, i) => {
                    const odd = i % 2 === 0;
                    return (
                      <tr key={r[0]}>
                        <Td $odd={odd}>{r[0]}</Td>
                        <Td $odd={odd}>{r[1]}</Td>
                        <Td $odd={odd}>{r[2]}<br />{r[3]}</Td>
                        <Td $odd={odd} $sorted>{r[4]}<br />{r[5]}</Td>
                        <Td $odd={odd}>{r[6]}</Td>
                        <Td $odd={odd}>Gene Expression</Td>
                        <Td $odd={odd} $wide>refdata-cellranger-GRCh38-<br />3.0.0_extended_mincoverage5_20190709_premRNA</Td>
                        <Td $odd={odd}>{r[7]}</Td>
                      </tr>
                    );
                  })}
                </tbody>
              </Table>
            </MainPane>
            <Scroll $w={18} $pt={4}>
              <ArrowUp />
              <Thumb $h={354} $mt={4} />
              <ArrowDown $mb={6} />
            </Scroll>
          </ModalBody>
          <HScroll><ArrowL /><HThumb /><ArrowR /></HScroll>
        </Modal>
      </Page>
      <Taskbar>
        <TaskSlot $w={48}><Win /></TaskSlot>
        <TaskSlot $w={48}><SearchGlyph /></TaskSlot>
        <TaskSlot $w={48}><TaskView /></TaskSlot>
        <Spacer />
        <TaskSlot $bar><Explorer /></TaskSlot>
        <TaskSlot $bar $full $bg="#3d525c"><Edge /></TaskSlot>
        <TaskSlot><Store /></TaskSlot>
        <TaskSlot $bar><Outlook /></TaskSlot>
        <TaskSlot $bar><VSCode /></TaskSlot>
        <TaskSlot $bar><Git /></TaskSlot>
        <TaskSlot $bar><RIcon /></TaskSlot>
        <TaskSlot $bar $full $bg="#a9692f" $barColor="#f07a10"><Photos /></TaskSlot>
        <TaskSlot $bar><Ppt /></TaskSlot>
        <TaskSlot $bar><Ink /></TaskSlot>
        <TaskSlot $bar><Chrome /></TaskSlot>
        <TaskSlot $bar><OneNote /></TaskSlot>
        <TaskSlot $bar><Term /></TaskSlot>
        <TaskSlot><Settings size={24} color="#fff" strokeWidth={2.2} /></TaskSlot>
        <TaskSlot $bar><Teams /></TaskSlot>
        <Clock>5:54 PM<br />10/6/2021</Clock>
      </Taskbar>
    </Root>
  );
}
